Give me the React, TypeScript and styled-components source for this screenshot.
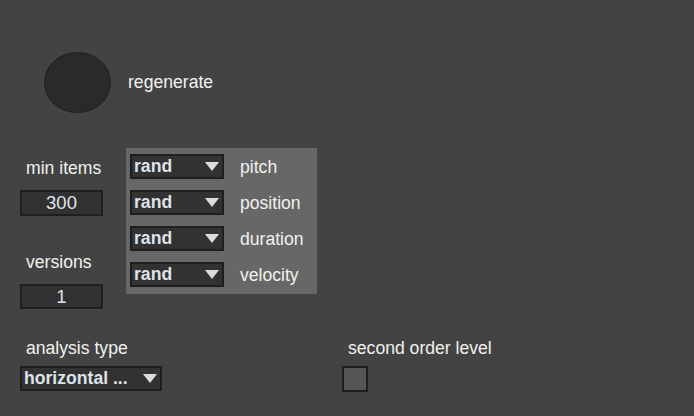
import React from "react";
import styled, { createGlobalStyle } from "styled-components";

const Global = createGlobalStyle`
  html, body { margin: 0; padding: 0; background: #434343; }
  * { box-sizing: border-box; }
`;

const Page = styled.div`
  width: 694px;
  height: 416px;
  background: #434343;
  font-family: "Liberation Sans", Arial, sans-serif;
  font-size: 17.6px;
  color: #f1f1ee;
  overflow: hidden;
  display: flex;
  flex-direction: column;
`;

const Header = styled.div`
  display: flex;
  align-items: center;
  gap: 17px;
  margin: 52px 0 0 44px;
  height: 61px;
`;

const Knob = styled.div`
  width: 67px;
  height: 61px;
  border-radius: 50%;
  background: #2a2a2a;
  border: 1px solid #222;
`;

const Label = styled.div<{ $mt?: number }>`
  line-height: 20px;
  height: 20px;
  padding-left: 6px;
  margin-top: ${(p) => p.$mt ?? 0}px;
  white-space: nowrap;
`;

const Middle = styled.div`
  display: flex;
  margin-top: 35px;
`;

const LeftCol = styled.div`
  flex: none;
  width: 126px;
  padding-left: 20px;
  display: flex;
  flex-direction: column;
`;

const NumBox = styled.div<{ $mt: number; $h: number }>`
  margin-top: ${(p) => p.$mt}px;
  width: 83px;
  height: ${(p) => p.$h}px;
  background: #313131;
  border: 2px solid #1f1f1f;
  color: #dfe5ee;
  display: flex;
  align-items: center;
  justify-content: center;
  font-size: 18.5px;
`;

const Panel = styled.div`
  flex: none;
  width: 191px;
  height: 146px;
  background: #676767;
  padding: 6px 4px 7px 4px;
  display: grid;
  grid-template-columns: 94px auto;
  grid-auto-rows: 25px;
  row-gap: 11px;
  column-gap: 16px;
  align-items: center;
`;

const Select = styled.div<{ $w: number; $mt?: number }>`
  width: ${(p) => p.$w}px;
  height: 25px;
  margin-top: ${(p) => p.$mt ?? 0}px;
  background: #323232;
  border: 2px solid #1e1e1e;
  display: flex;
  align-items: center;
  justify-content: space-between;
  padding: 0 3px 0 2px;
  font-weight: bold;
  color: #dde3ea;
  white-space: nowrap;
`;

const Arrow = styled.svg`
  width: 14px;
  height: 9px;
  flex: none;
`;

const PanelLabel = styled.div`
  white-space: nowrap;
  line-height: 20px;
`;

const Bottom = styled.div`
  display: flex;
  margin-top: 29px;
`;

const BottomCol = styled.div<{ $w: number }>`
  flex: none;
  width: ${(p) => p.$w}px;
  padding-left: 20px;
  display: flex;
  flex-direction: column;
`;

const Check = styled.div`
  margin-top: 8px;
  width: 26px;
  height: 26px;
  background: #565656;
  border: 2px solid #1f1f1f;
`;

const DropArrow = () => (
  <Arrow viewBox="0 0 14 9">
    <polygon points="0,0 14,0 7,9" fill="#dcdcdc" />
  </Arrow>
);

const rows = ["pitch", "position", "duration", "velocity"];

export default function App() {
  return (
    <>
      <Global />
      <Page>
        <Header>
          <Knob />
          <span>regenerate</span>
        </Header>
        <Middle>
          <LeftCol>
            <Label $mt={10}>min items</Label>
            <NumBox $mt={12} $h={26}>300</NumBox>
            <Label $mt={36}>versions</Label>
            <NumBox $mt={12} $h={25}>1</NumBox>
          </LeftCol>
          <Panel>
            {rows.map((r) => (
              <React.Fragment key={r}>
                <Select $w={94}>
                  <span>rand</span>
                  <DropArrow />
                </Select>
                <PanelLabel>{r}</PanelLabel>
              </React.Fragment>
            ))}
          </Panel>
        </Middle>
        <Bottom>
          <BottomCol $w={322}>
            <Label>analysis type</Label>
            <Select $w={142} $mt={8}>
              <span>horizontal ...</span>
              <DropArrow />
            </Select>
          </BottomCol>
          <BottomCol $w={300}>
            <Label>second order level</Label>
            <Check />
          </BottomCol>
        </Bottom>
      </Page>
    </>
  );
}
